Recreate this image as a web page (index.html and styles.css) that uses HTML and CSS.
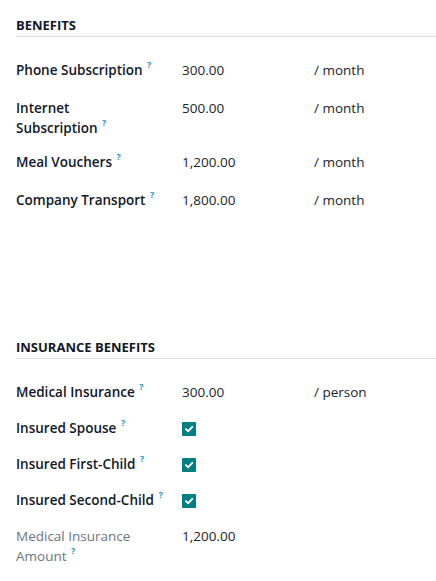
FILE: index.html
```html
<!DOCTYPE html>
<html>
<head>
<meta charset="utf-8">
<link rel="stylesheet" href="styles.css">
</head>
<body>
<div class="page">
  <section class="group">
    <h2 class="group-title">Benefits</h2>
    <div class="rows">
      <div class="row">
        <div class="label">Phone Subscription <sup class="tip">?</sup></div>
        <div class="value">300.00</div>
        <div class="unit">/ month</div>
      </div>
      <div class="row">
        <div class="label">Internet<br>Subscription <sup class="tip">?</sup></div>
        <div class="value">500.00</div>
        <div class="unit">/ month</div>
      </div>
      <div class="row">
        <div class="label">Meal Vouchers <sup class="tip">?</sup></div>
        <div class="value">1,200.00</div>
        <div class="unit">/ month</div>
      </div>
      <div class="row">
        <div class="label">Company Transport <sup class="tip">?</sup></div>
        <div class="value">1,800.00</div>
        <div class="unit">/ month</div>
      </div>
    </div>
  </section>

  <section class="group group-second">
    <h2 class="group-title">Insurance Benefits</h2>
    <div class="rows rows-tight">
      <div class="row">
        <div class="label">Medical Insurance <sup class="tip">?</sup></div>
        <div class="value">300.00</div>
        <div class="unit">/ person</div>
      </div>
      <div class="row">
        <div class="label">Insured Spouse <sup class="tip">?</sup></div>
        <div class="value"><span class="check"><svg viewBox="0 0 14 14" width="14" height="14"><path d="M4 7.2 L6.1 9.2 L10.2 5" fill="none" stroke="#fff" stroke-width="1.8" stroke-linecap="square"/></svg></span></div>
        <div class="unit"></div>
      </div>
      <div class="row">
        <div class="label">Insured First-Child <sup class="tip">?</sup></div>
        <div class="value"><span class="check"><svg viewBox="0 0 14 14" width="14" height="14"><path d="M4 7.2 L6.1 9.2 L10.2 5" fill="none" stroke="#fff" stroke-width="1.8" stroke-linecap="square"/></svg></span></div>
        <div class="unit"></div>
      </div>
      <div class="row">
        <div class="label">Insured Second-Child <sup class="tip">?</sup></div>
        <div class="value"><span class="check"><svg viewBox="0 0 14 14" width="14" height="14"><path d="M4 7.2 L6.1 9.2 L10.2 5" fill="none" stroke="#fff" stroke-width="1.8" stroke-linecap="square"/></svg></span></div>
        <div class="unit"></div>
      </div>
      <div class="row">
        <div class="label label-muted">Medical Insurance<br>Amount <sup class="tip">?</sup></div>
        <div class="value">1,200.00</div>
        <div class="unit"></div>
      </div>
    </div>
  </section>
</div>
</body>
</html>
```

FILE: styles.css
```css
html, body {
  margin: 0;
  padding: 0;
  background: #ffffff;
}

body {
  font-family: "Open Sans", "Noto Sans", sans-serif;
  font-size: 13.5px;
  color: #212529;
}

.page {
  padding: 16px 0 0 16px;
}

.group-title {
  margin: 0;
  font-size: 13px;
  font-weight: 700;
  line-height: 18px;
  text-transform: uppercase;
  color: #111827;
  padding-bottom: 2px;
  border-bottom: 1px solid #dee2e6;
}

.rows {
  margin-top: 23px;
}

.group-second {
  margin-top: 111px;
}

.row {
  display: grid;
  grid-template-columns: 166px 132px 1fr;
  min-height: 23px;
  padding-bottom: 14.5px;
  line-height: 20px;
}

.rows-tight .row {
  padding-bottom: 13px;
}

.label {
  font-weight: 600;
  color: #111827;
}

.label-muted {
  font-weight: 400;
  color: #6c757d;
}

.tip {
  font-size: 9px;
  font-weight: 700;
  color: #2596be;
  line-height: 0;
  vertical-align: 7px;
  margin-left: 1px;
}

.value, .unit {
  color: #212529;
}

.check {
  display: inline-block;
  width: 14px;
  height: 14px;
  margin-top: 4px;
  background: #017e84;
  border-radius: 1px;
}

.check svg {
  display: block;
}
```
